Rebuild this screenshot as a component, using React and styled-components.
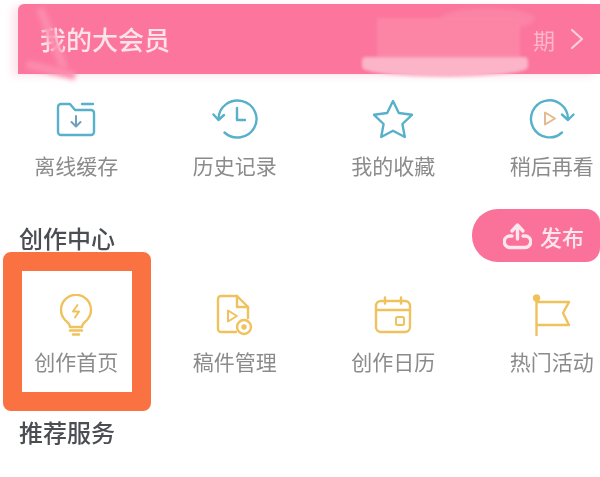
import React from 'react';
import styled, { createGlobalStyle } from 'styled-components';

const GlobalStyle = createGlobalStyle`
    html, body {
        margin: 0;
        padding: 0;
        background: #fff;
    }
    body {
        font-family: "Noto Sans CJK SC", "Noto Sans", sans-serif;
    }
`;

const Page = styled.div`
    position: relative;
    width: 600px;
    height: 477px;
    overflow: hidden;
    background: #fff;
    filter: blur(0.7px);
`;

const Banner = styled.div`
    position: relative;
    display: flex;
    align-items: center;
    justify-content: space-between;
    height: 70px;
    margin: 4px 0 0 18px;
    padding: 0 16px 0 22px;
    background: #fb759d;
    border-radius: 6px 0 0 0;
    box-shadow: -6px 2px 8px #fde4ec;
    color: #fde3ea;
`;

const BannerTitle = styled.span`
    font-size: 26px;
    line-height: 36px;
    font-weight: 500;
`;

const BannerMore = styled.div`
    display: flex;
    align-items: center;
    gap: 15px;
    font-size: 22px;
    color: #fbb7cb;
`;

const Streak = styled.div`
    position: absolute;
    left: ${(p) => p.$left}px;
    top: ${(p) => p.$top}px;
    width: ${(p) => p.$width}px;
    height: 8px;
    background: #fc8dae;
    transform: rotate(${(p) => p.$angle}deg);
    filter: blur(2.5px);
`;

const Smudge = styled.div`
    position: absolute;
    left: 344px;
    top: 6px;
    width: 168px;
    height: 68px;
`;

const SmudgeCap = styled.div`
    position: absolute;
    left: 78px;
    top: -2px;
    width: 95px;
    height: 22px;
    border-radius: 50%;
    background: #fb84a6;
    filter: blur(2px);
`;

const SmudgeBody = styled.div`
    position: absolute;
    left: 15px;
    top: 8px;
    width: 143px;
    height: 40px;
    background: #fc85a6;
    filter: blur(1.5px);
`;

const SmudgeBottom = styled.div`
    position: absolute;
    left: 0;
    top: 47px;
    width: 166px;
    height: 20px;
    border-radius: 4px 4px 50% 50%;
    background: #fbb4c8;
    filter: blur(1.5px);
`;

const IconGrid = styled.div`
    display: grid;
    grid-template-columns: repeat(4, 158.5px);
    margin-left: -3px;
    padding-top: ${(p) => p.$top}px;
`;

const Item = styled.div`
    display: flex;
    flex-direction: column;
    align-items: center;
`;

const IconSlot = styled.div`
    display: flex;
    align-items: center;
    justify-content: center;
    height: 40px;
    margin-bottom: 13px;
`;

const Label = styled.span`
    font-size: 21px;
    line-height: 26px;
    color: #8b8b8b;
    white-space: nowrap;
`;

const SectionHead = styled.div`
    display: flex;
    align-items: flex-end;
    justify-content: space-between;
    height: 84px;
    padding-left: 19px;
`;

const SectionTitle = styled.span`
    font-size: 24px;
    line-height: 32px;
    font-weight: 500;
    color: #4a4d52;
    margin-bottom: ${(p) => p.$bottom || 0}px;
`;

const PublishButton = styled.div`
    display: flex;
    align-items: center;
    gap: 8px;
    width: 128px;
    height: 53px;
    box-sizing: border-box;
    padding-left: 31px;
    background: #fa719a;
    border-radius: 26px 14px 14px 26px;
    color: #fde6ed;
    font-size: 22px;
    font-weight: 500;
`;

const Highlight = styled.div`
    position: absolute;
    left: 3px;
    top: 252px;
    width: 148px;
    height: 159px;
    box-sizing: border-box;
    border: 19px solid #fb7242;
    border-radius: 8px;
`;

const NextSection = styled.div`
    display: flex;
    padding: 42px 0 0 19px;
`;

const Line = ({ children, color, w = 2.4, ...rest }) => (
    <svg
        fill="none"
        stroke={color}
        strokeWidth={w}
        strokeLinecap="round"
        strokeLinejoin="round"
        {...rest}
    >
        {children}
    </svg>
);

const TEAL = '#58b1cb';
const YELLOW = '#f0c25e';

const FolderIcon = () => (
    <Line color={TEAL} width="40" height="36" viewBox="0 0 40 36">
        <path d="M2 6a3 3 0 0 1 3-3h9l5 6h16a3 3 0 0 1 3 3v19a3 3 0 0 1-3 3H5a3 3 0 0 1-3-3z" />
        <path d="M26 3h11" />
        <path d="M20 15v10M15.500 21l4.500 4.500 4.500-4.500" stroke="#6d9fc0" strokeWidth="2" />
    </Line>
);

const HistoryIcon = () => (
    <Line color={TEAL} width="46" height="40" viewBox="0 0 46 40">
        <path d="M6.500 20a19 18.500 0 1 1 6 13.500" />
        <path d="M1.500 15.500l5 5.500 5.500-5" />
        <path d="M25 9v12h8" />
    </Line>
);

const StarIcon = () => (
    <Line color={TEAL} width="42" height="40" viewBox="0 0 42 40">
        <path d="M21 2l5.800 12 13.200 1.800-9.600 9.200 2.400 13L21 31.800 9.200 38l2.400-13L2 15.800 15.200 14z" />
    </Line>
);

const ReplayIcon = () => (
    <Line color={TEAL} width="46" height="40" viewBox="0 0 46 40">
        <path d="M39 20A18.500 18.500 0 1 0 33 33.500" />
        <path d="M33 15.500l6 5.500 5.500-5.500" />
        <path d="M16 13.500v12l10-6z" stroke="#e3b98d" strokeWidth="2" />
    </Line>
);

const BulbIcon = () => (
    <Line color={YELLOW} width="36" height="42" viewBox="0 0 36 42">
        <path d="M12 33c0-3-3-5-5-7A15 15 0 1 1 29 26c-2 2-5 4-5 7z" />
        <path d="M12 36.500h12M15 40.500h6" />
        <path d="M19.500 11l-4.500 6.500h6l-4 6" strokeWidth="2" />
    </Line>
);

const DraftIcon = () => (
    <Line color={YELLOW} width="38" height="42" viewBox="0 0 38 42">
        <path d="M20 38H5a3 3 0 0 1-3-3V5a3 3 0 0 1 3-3h16l11 11v11" />
        <path d="M21 2v11h11" />
        <path d="M12 16.500v11l9-5.500z" strokeWidth="2" />
        <circle cx="28" cy="33" r="7" />
        <circle cx="28" cy="33" r="1.500" fill={YELLOW} />
    </Line>
);

const CalendarIcon = () => (
    <Line color={YELLOW} width="38" height="38" viewBox="0 0 38 38">
        <rect x="2" y="5" width="34" height="31" rx="5" />
        <path d="M2 14h34M11 1.500v6M27 1.500v6" />
        <rect x="22" y="21" width="8" height="8" rx="1.500" strokeWidth="2" />
    </Line>
);

const FlagIcon = () => (
    <Line color={YELLOW} width="38" height="42" viewBox="0 0 38 42">
        <circle cx="3.500" cy="4" r="2.500" fill={YELLOW} />
        <path d="M3.500 6v35" />
        <path d="M4 8h32l-6 11 6 12H4" />
    </Line>
);

const UploadIcon = () => (
    <Line color="#fde6ed" w={3.4} width="29" height="28" viewBox="0 0 29 28">
        <path d="M14.500 17V3.500M9 9l5.500-6 5.500 6" />
        <path d="M9 14H7a5.500 5.500 0 0 0 0 11.500h15A5.500 5.500 0 0 0 22 14h-2" />
    </Line>
);

const Chevron = () => (
    <Line color="#fbd0dc" w={2.2} width="14" height="22" viewBox="0 0 14 22">
        <path d="M2 2l10 9-10 9" />
    </Line>
);

const topItems = [
    { label: '离线缓存', icon: <FolderIcon /> },
    { label: '历史记录', icon: <HistoryIcon /> },
    { label: '我的收藏', icon: <StarIcon /> },
    { label: '稍后再看', icon: <ReplayIcon /> },
];

const creatorItems = [
    { label: '创作首页', icon: <BulbIcon /> },
    { label: '稿件管理', icon: <DraftIcon /> },
    { label: '创作日历', icon: <CalendarIcon /> },
    { label: '热门活动', icon: <FlagIcon /> },
];

const Row = ({ items, top }) => (
    <IconGrid $top={top}>
        {items.map((item) => (
            <Item key={item.label}>
                <IconSlot>{item.icon}</IconSlot>
                <Label>{item.label}</Label>
            </Item>
        ))}
    </IconGrid>
);

export default function App() {
    return (
        <Page>
            <GlobalStyle />
            <Banner>
                <Streak $left={2} $top={30} $width={64} $angle={68} />
                <Streak $left={8} $top={62} $width={50} $angle={14} />
                <BannerTitle>我的大会员</BannerTitle>
                <BannerMore>
                    <span>期</span>
                    <Chevron />
                </BannerMore>
                <Smudge>
                    <SmudgeCap />
                    <SmudgeBody />
                    <SmudgeBottom />
                </Smudge>
            </Banner>
            <Row items={topItems} top={25} />
            <SectionHead>
                <SectionTitle $bottom={8}>创作中心</SectionTitle>
                <PublishButton>
                    <UploadIcon />
                    发布
                </PublishButton>
            </SectionHead>
            <Row items={creatorItems} top={33} />
            <NextSection>
                <SectionTitle>推荐服务</SectionTitle>
            </NextSection>
            <Highlight />
        </Page>
    );
}
